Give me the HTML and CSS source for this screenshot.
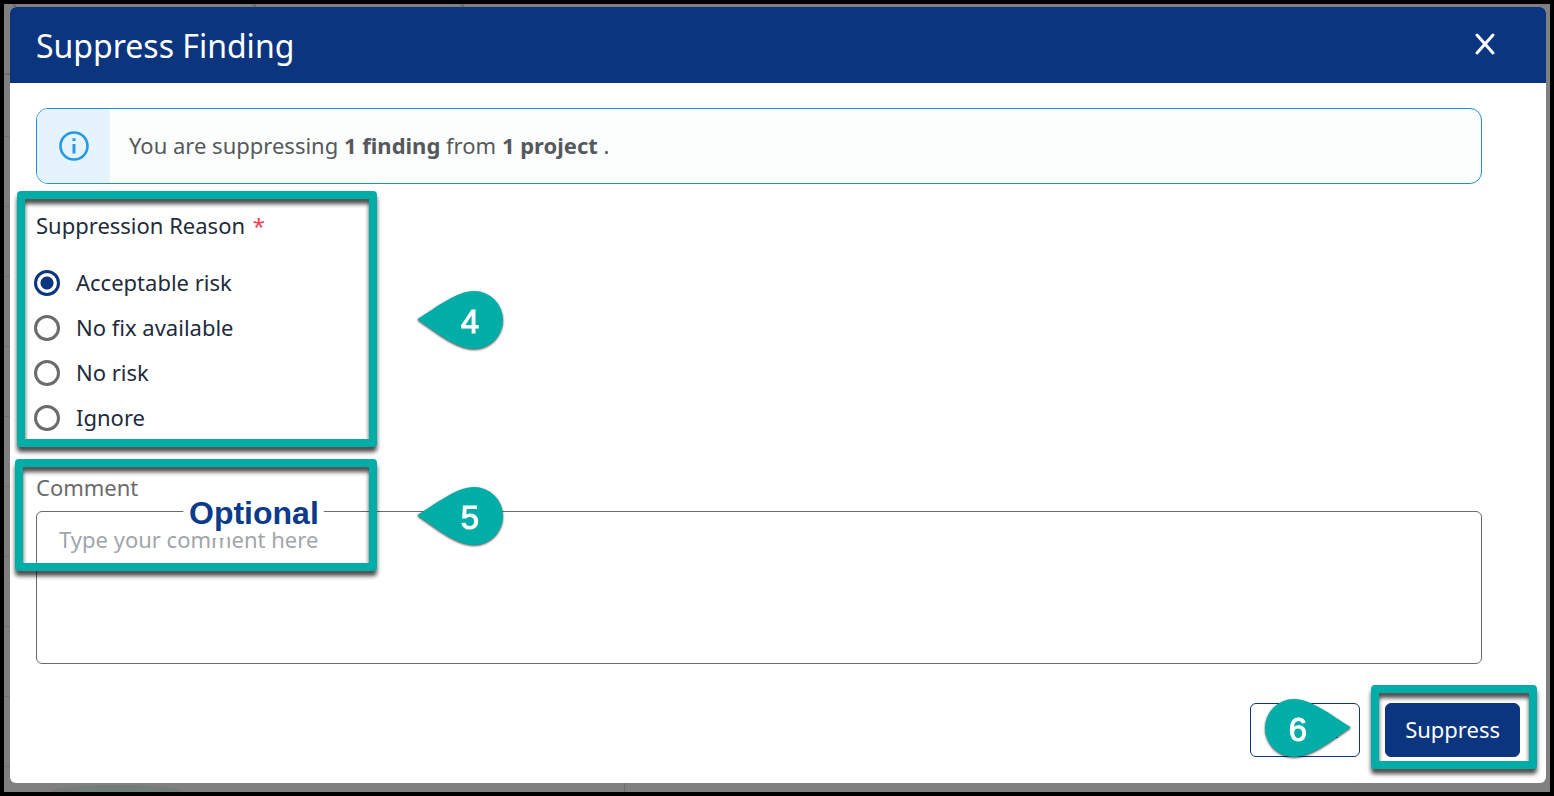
FILE: index.html
```
<!DOCTYPE html>
<html lang="en">
<head>
    <meta charset="UTF-8">
    <meta name="viewport" content="width=device-width, initial-scale=1.0">
    <title>Suppress Finding</title>
    <link rel="stylesheet" href="styles.css">
</head>
<body>
    <div class="backdrop">
        <div class="modal" role="dialog" aria-labelledby="modal-title">
            <header class="modal-header">
                <h1 id="modal-title">Suppress Finding</h1>
                <button type="button" class="close-btn" aria-label="Close">
                    <svg width="20" height="22" viewBox="0 0 20 22" fill="none" stroke="#fff" stroke-width="3" stroke-linecap="round">
                        <path d="M2 2 L18 20 M18 2 L2 20" />
                    </svg>
                </button>
            </header>

            <form class="modal-body">
                <div class="alert">
                    <div class="alert-icon">
                        <svg width="30" height="30" viewBox="0 0 30 30">
                            <circle cx="15" cy="15" r="13.5" fill="none" stroke="#2499e8" stroke-width="2.6" />
                            <path d="M13.5 7.3h3v2.8h-3z M13.5 13h3v9.4h-3z" fill="#2499e8" />
                        </svg>
                    </div>
                    <p>You are suppressing <b>1 finding</b> from <b>1 project</b> .</p>
                </div>

                <fieldset class="reasons">
                    <legend>Suppression Reason <span class="required">*</span></legend>
                    <label><input type="radio" name="reason" checked> Acceptable risk</label>
                    <label><input type="radio" name="reason"> No fix available</label>
                    <label><input type="radio" name="reason"> No risk</label>
                    <label><input type="radio" name="reason"> Ignore</label>
                    <span class="highlight highlight-reasons"></span>
                    <svg class="marker marker-reasons" width="86" height="60" viewBox="0 0 86 60">
                        <path d="M1 30 Q0 29 2 28 C20 17 40 1 57 1 A29 29 0 0 1 57 59 C40 59 20 43 1 30 Z" />
                        <text x="53" y="43">4</text>
                    </svg>
                </fieldset>

                <div class="comment">
                    <label for="comment">Comment</label>
                    <textarea id="comment" placeholder="Type your comment here"></textarea>
                    <span class="optional">Optional</span>
                    <span class="highlight highlight-comment"></span>
                    <svg class="marker marker-comment" width="86" height="60" viewBox="0 0 86 60">
                        <path d="M1 30 Q0 29 2 28 C20 17 40 1 57 1 A29 29 0 0 1 57 59 C40 59 20 43 1 30 Z" />
                        <text x="53" y="43">5</text>
                    </svg>
                </div>

                <div class="actions">
                    <div class="action">
                        <button type="button" class="btn">Cancel</button>
                        <svg class="marker marker-action" width="86" height="60" viewBox="0 0 86 60">
                            <path d="M85 30 Q86 29 84 28 C66 17 46 1 29 1 A29 29 0 0 0 29 59 C46 59 66 43 85 30 Z" />
                            <text x="33" y="43">6</text>
                        </svg>
                    </div>
                    <div class="action">
                        <button type="button" class="btn btn-primary">Suppress</button>
                        <span class="highlight highlight-action"></span>
                    </div>
                </div>
            </form>
        </div>
    </div>
</body>
</html>
```
FILE: styles.css
```
* {
    box-sizing: border-box;
}

body {
    margin: 0;
    font-family: "Noto Sans", sans-serif;
    font-size: 22px;
    line-height: 28px;
    color: #212b3b;
}

/* dimmed page behind the dialog */
.backdrop {
    min-height: 100vh;
    display: flex;
    padding: 3px 4px 9px 6px;
    border: 4px solid #000;
    background-color: #808080;
    background-image:
        linear-gradient(#6c6c6c, #6c6c6c),
        linear-gradient(#6e6e6e, #6e6e6e),
        linear-gradient(#6e6e6e, #6e6e6e),
        linear-gradient(#6e6e6e, #6e6e6e),
        linear-gradient(#6c6c6c, #6c6c6c),
        radial-gradient(ellipse 66px 7px at bottom, #737d79 99%, transparent),
        repeating-linear-gradient(#808080 0, #808080 69px, #717174 69px, #717174 70px);
    background-size: 6px 2px, 3px 3px, 3px 3px, 3px 3px, 1px 9px, 134px 7px, 6px 100%;
    background-position: 0 69px, 9px 0, 249px 0, 457px 0, 620px 100%, 46px 100%, 0 63px;
    background-repeat: no-repeat;
}

.modal {
    flex: 1;
    display: flex;
    flex-direction: column;
    background-color: #fff;
    border-radius: 6px;
}

.modal-header {
    display: flex;
    align-items: center;
    justify-content: space-between;
    height: 76px;
    padding: 0 46px 0 26px;
    background-color: #0b357f;
    color: #fff;
    border-radius: 6px 6px 0 0;
}

.modal-header h1 {
    margin: 0;
    padding-top: 2px;
    font-size: 32px;
    font-weight: 400;
    line-height: 44px;
}

.close-btn {
    display: flex;
    padding: 5px 5px 7px;
    border: 0;
    background: none;
    cursor: pointer;
}

.modal-body {
    flex: 1;
    display: flex;
    flex-direction: column;
    padding: 25px 26px 26px;
}

.alert {
    display: flex;
    align-items: center;
    height: 76px;
    margin-right: 38px;
    border: 1px solid #1b8ee4;
    border-radius: 12px;
    background-color: #fcfefe;
    color: #55595c;
    overflow: hidden;
}

.alert-icon {
    display: flex;
    align-items: center;
    justify-content: center;
    width: 73px;
    height: 100%;
    background-color: #e5f3fd;
}

.alert p {
    margin: 0 19px;
    padding-bottom: 2px;
}

.reasons {
    position: relative;
    display: flex;
    flex-direction: column;
    gap: 15px;
    margin: 27px 0 0;
    padding: 0;
    border: 0;
}

.reasons legend {
    padding: 0;
    margin-bottom: 29px;
}

.required {
    margin-left: 2px;
    color: #f23d55;
}

.reasons label {
    display: flex;
    gap: 16px;
    height: 30px;
}

.reasons input {
    appearance: none;
    width: 26px;
    height: 26px;
    margin: 2px 0 0 -2px;
    border: 3px solid #6b6b6b;
    border-radius: 50%;
}

.reasons input:checked {
    border-color: #0b357f;
    background: radial-gradient(circle, #0b357f 6px, #fff 7px);
}

.comment {
    position: relative;
    display: flex;
    flex-direction: column;
    gap: 10px;
    margin: 40px 38px 0 0;
    color: #6b6b6b;
}

.comment textarea {
    height: 153px;
    padding: 13px 22px;
    border: 1px solid #6b6b6b;
    border-radius: 6px;
    background: none;
    font: inherit;
    resize: none;
}

.comment textarea::placeholder {
    color: #a1a5ab;
}

/* white halo keeps the word readable over the field border */
.optional {
    position: absolute;
    top: 22px;
    left: 153px;
    font: bold 32px/36px "Liberation Sans", Arial, sans-serif;
    color: #0b3b8a;
    -webkit-text-stroke: 14px #fff;
    paint-order: stroke fill;
}

.actions {
    display: flex;
    justify-content: flex-end;
    gap: 25px;
    margin-top: auto;
}

.action {
    position: relative;
}

.btn {
    min-width: 110px;
    height: 54px;
    padding: 0 19px 2px;
    border: 1px solid #0b357f;
    border-radius: 6px;
    background-color: #fff;
    color: #0b357f;
    font: inherit;
    cursor: pointer;
}

.btn-primary {
    background-color: #0b357f;
    color: #fff;
}

/* callouts */
.highlight {
    position: absolute;
    border: 8px solid #00ada7;
    border-radius: 4px;
    filter: drop-shadow(0 5px 2px rgba(0, 0, 0, 0.7));
    pointer-events: none;
}

/* offsets count from below the legend */
.highlight-reasons {
    top: -77px;
    left: -19px;
    width: 360px;
    height: 256px;
}

.highlight-comment {
    top: -14px;
    left: -21px;
    width: 362px;
    height: 112px;
}

.highlight-action {
    inset: -18px -17px -12px -14px;
}

.marker {
    position: absolute;
    overflow: visible;
    filter: drop-shadow(0 1px 1px rgba(0, 0, 0, 0.7));
    pointer-events: none;
}

.marker path {
    fill: #00ada7;
}

.marker text {
    fill: #fff;
    stroke: #fff;
    stroke-width: 1px;
    font: 33px "Liberation Sans", Arial, sans-serif;
    text-anchor: middle;
}

.marker-reasons {
    top: 22px;
    left: 381px;
}

.marker-comment {
    top: 13px;
    left: 381px;
}

.marker-action {
    top: -5px;
    left: 15px;
}
```
